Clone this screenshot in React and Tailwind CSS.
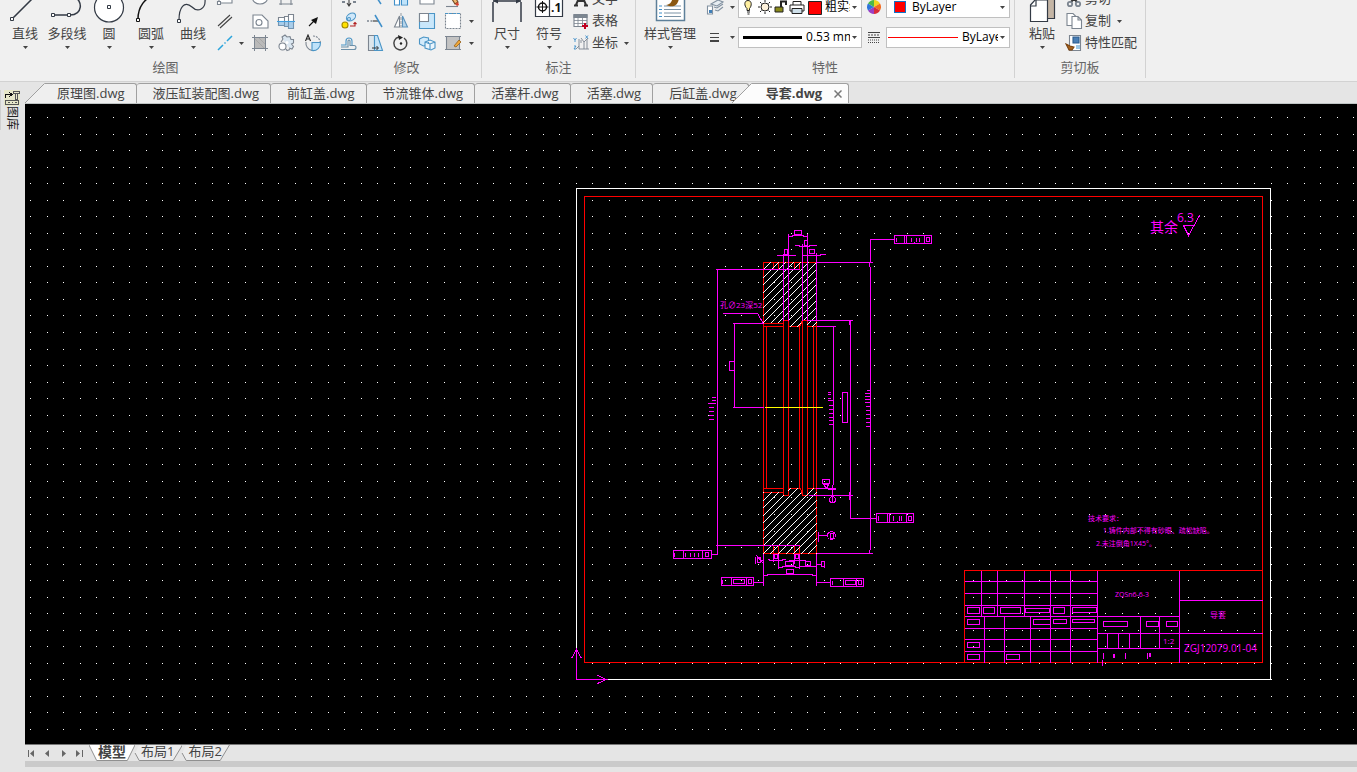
import { useState } from 'react'

const FILES = ['原理图', '液压缸装配图', '前缸盖', '节流锥体', '活塞杆', '活塞', '后缸盖', '导套']

/* ---------- ribbon pieces ---------- */

function Caret() {
  return (
    <svg className="w-[5px] h-[3px] shrink-0" viewBox="0 0 5 3" fill="#444">
      <path d="M0 0h5L2.5 3z" />
    </svg>
  )
}

function Group({ label, children }) {
  return (
    <section className="flex flex-col shrink-0 h-[78px] px-1 border-r border-[#d2d2d2]">
      <div className="flex items-end h-[54px]">{children}</div>
      <h2 className="h-6 pt-[3px] text-[13px] leading-5 text-center text-[#666]">{label}</h2>
    </section>
  )
}

function BigButton({ label, children, wide }) {
  return (
    <button className={wide ? 'flex flex-col items-center w-[60px]' : 'flex flex-col items-center w-[42px]'}>
      <svg className="size-8 shrink-0" viewBox="0 0 32 32" fill="none" stroke="#333a45" strokeWidth="1.5">
        {children}
      </svg>
      <span className="text-[13px] leading-[18px] whitespace-nowrap">{label}</span>
      <span className="flex items-center h-3 pb-0.5"><Caret /></span>
    </button>
  )
}

function Icon({ children }) {
  return (
    <svg className="size-[18px] shrink-0" viewBox="0 0 18 18" fill="none" stroke="#7c8590" strokeWidth="1.1">
      {children}
    </svg>
  )
}

function Tool({ name, children }) {
  return (
    <button aria-label={name} className="flex items-center justify-center h-[22px]">
      <Icon>{children}</Icon>
    </button>
  )
}

function TextTool({ label, arrow, children }) {
  return (
    <button className="flex items-center h-[22px] pl-0.5 gap-0.5 text-[13px] whitespace-nowrap">
      <Icon>{children}</Icon>
      {label}
      {arrow && <span className="pl-1"><Caret /></span>}
    </button>
  )
}

function More({ name }) {
  return (
    <button aria-label={name} className="flex items-center justify-center h-[22px]">
      <Caret />
    </button>
  )
}

function Combo({ name, value, children }) {
  return (
    <div className="flex items-center w-[124px] h-[21px] px-1 bg-white border border-[#c0c0c0] text-black">
      {children}
      <select
        aria-label={name}
        className="flex-1 min-w-0 h-4 ml-1 mr-0.5 p-0 text-[12px] leading-4 appearance-none bg-transparent overflow-hidden"
      >
        <option>{value}</option>
      </select>
      <Caret />
    </div>
  )
}

function DrawGroup() {
  return (
    <Group label="绘图">
      <BigButton label="直线">
        <path d="M3 27L30 0" />
        <path d="M1.500 25.500h3v3h-3z" fill="#fff" strokeWidth="1" />
      </BigButton>
      <BigButton label="多段线">
        <path d="M2 23h17c13 0 13-15 4-18" />
        <path d="M.5 21.500h3v3h-3zM16.500 21.500h3v3h-3z" fill="#fff" strokeWidth="1" />
      </BigButton>
      <BigButton label="圆">
        <circle cx="16" cy="15.500" r="14.500" fill="#fff" strokeWidth="1.2" />
        <path d="M14.500 13.500h3v3h-3z" strokeWidth="1" />
      </BigButton>
      <BigButton label="圆弧">
        <path d="M3 27C3 15 10 5 20 4" stroke="#111" />
        <path d="M1.500 26.500h3v3h-3z" fill="#fff" stroke="#111" strokeWidth="1" />
      </BigButton>
      <BigButton label="曲线">
        <path d="M2 28C2 16 7 8 15 15c6 6 14 2 13-8" strokeWidth="1.2" />
        <path d="M.5 27.500h3v3h-3z" fill="#fff" strokeWidth="1" />
      </BigButton>
      <div className="grid grid-cols-[22px_11px_26px_26px_28px]">
        <Tool name="矩形"><path d="M3 12V3h13v10H5" fill="#fff" /><path d="M1.500 11.500h3v3h-3z" fill="#fff" /></Tool>
        <span />
        <Tool name="椭圆"><ellipse cx="9" cy="8" rx="7.500" ry="6" fill="#fff" /></Tool>
        <Tool name="孔/轴"><path d="M4 2v13M14 2v13M2 14h14M4 3h10" /></Tool>
        <span />

        <Tool name="双线"><path d="M2 14L14 3M4 16L16 5" stroke="#444" /></Tool>
        <span />
        <Tool name="轮廓线">
          <path d="M2 3h9l6 6v7H2z" fill="#fff" />
          <circle cx="8" cy="10.500" r="3" />
        </Tool>
        <Tool name="轴">
          <path d="M1.500 5.500h6v4h-6zM7.500 4.500h4v5h-4zM11.500 2.500h5v7h-5z" fill="#fff" />
          <path d="M1.500 9.500h6v4h-6zM7.500 9.500h4v5h-4zM11.500 9.500h5v7h-5z" fill="#a9cdea" stroke="#7395b2" />
          <path d="M0 9.500h18" stroke="#3f9fe0" />
        </Tool>
        <Tool name="箭头">
          <path d="M5 14l5-5" stroke="#111" />
          <path d="M14 5l-2 7-5-4z" fill="#111" stroke="none" />
        </Tool>

        <Tool name="中心线"><path d="M2 16l5-5M8.500 9.500l1-1M11 7l5-5" stroke="#2aa4dc" strokeWidth="1.500" /></Tool>
        <More name="更多中心线" />
        <Tool name="剖面线">
          <path d="M3 3h12v12H3z" fill="#b9b9b9" stroke="none" />
          <path d="M1 3.500h16M1 14.500h16M3.500 1v16M14.500 1v16" strokeWidth="1" />
          <path d="M4 5l9 9M8 4l6 6" stroke="#a2a2a2" strokeWidth=".8" />
        </Tool>
        <Tool name="齿轮">
          <path
            d="M6 5l-1-2 3-2 2 2 3-.5 1 3 2.500 0v3.500l-2 1 2 2.500-1.500 2.500-3-1"
            fill="#dbe7f1"
          />
          <path d="M13 15.500l-3 1-1-1.500M6 5L4 8" fill="none" />
          <circle cx="5.500" cy="12.500" r="3.500" fill="#fff" />
          <circle cx="10" cy="8.500" r="1.500" fill="#fff" stroke="none" />
        </Tool>
        <Tool name="局部放大">
          <path d="M2 8a7.500 7.500 0 0 0 6 8.500" />
          <path d="M9 2a7.500 7.500 0 0 1 7.500 7" strokeDasharray="2 1" />
          <path d="M8 8.500h8.500A7.500 7.500 0 0 1 8 16.500z" fill="#bfe3fa" stroke="#4b95c6" />
          <path d="M1.500 7L4 1l2.500 6M2.500 5h3" stroke="#222" />
        </Tool>
      </div>
    </Group>
  )
}

function ModifyGroup() {
  return (
    <Group label="修改">
      <div className="grid grid-cols-[26px_26px_26px_26px_26px_11px]">
        <Tool name="移动"><path d="M9 1v14M2 9h14M7 13l2 3 2-3" stroke="#444" /><path d="M2 12h3M13 12h3" strokeWidth="2" /></Tool>
        <Tool name="裁剪"><path d="M7 2l8 12" stroke="#3f8fc9" strokeWidth="1.500" /><path d="M2 9h6" strokeDasharray="2 1" /></Tool>
        <Tool name="阵列"><path d="M2.500 5v10h5V5M9.500 2v13h6V2z" fill="#fff" stroke="#3f8fc9" /><path d="M10 8h5v6h-5z" fill="#bfe3fa" stroke="none" /></Tool>
        <Tool name="圆角"><path d="M2 2h14v12H2z" fill="#fff" /></Tool>
        <Tool name="删除">
          <path d="M6 6l5 8 3-2-5-8z" fill="#f1b56c" stroke="#6e4a22" />
          <path d="M11 14l3-2 1 3-2 1z" fill="#d8422e" stroke="none" />
          <path d="M2 16.500h12" />
        </Tool>
        <span />

        <Tool name="复制对象">
          <circle cx="5" cy="13" r="3" fill="#ffe200" stroke="#a38b00" />
          <ellipse cx="11" cy="5" rx="5" ry="3.500" transform="rotate(-35 11 5)" fill="#cfe8fa" stroke="#4b95c6" />
          <circle cx="9" cy="7" r="1.500" stroke="#4b95c6" />
          <path d="M10 14h5v-3M13.500 12l1.500-1.500L16.500 12" stroke="#b12121" />
        </Tool>
        <Tool name="延伸">
          <path d="M1 9h2M4.500 9h2" strokeWidth="1.500" />
          <path d="M7 9h6" stroke="#333" />
          <path d="M9 3l7 12" stroke="#3f8fc9" strokeWidth="1.500" />
        </Tool>
        <Tool name="镜像">
          <path d="M7.500 4v11h-5z" fill="#fff" />
          <path d="M10.500 4v11h5z" fill="#b8d5ea" stroke="#5b93bd" />
          <path d="M9 1v16" strokeDasharray="3 1" strokeWidth=".8" />
        </Tool>
        <Tool name="缩放">
          <path d="M1.500 1.500h15v15h-15z" fill="#c9e7fb" stroke="#4b95c6" />
          <path d="M1.500 1.500h9v8h-9z" fill="#fff" />
        </Tool>
        <Tool name="拉伸">
          <path d="M1.500 1.500h15v15h-15z" fill="#fff" strokeDasharray="2 1" />
          <path d="M1 1.500h16" stroke="#4b95c6" strokeDasharray="3 1" />
        </Tool>
        <More name="更多编辑" />

        <Tool name="偏移">
          <path d="M1 11h5V7a3 3 0 0 1 6 0v4" stroke="#4b95c6" />
          <path d="M1 15.500h13a2 2 0 0 0 0-4h-4V7a1 1 0 0 0-2 0v6H1" stroke="#6b8fa8" />
        </Tool>
        <Tool name="倒角">
          <path d="M2.500 1.500h6v15h-6z" fill="#dde6ec" />
          <path d="M8.500 1.500h3l5 15h-8z" fill="#c5e4f9" stroke="#4b95c6" />
          <path d="M6 14h6M10.500 12l2 2-2 2" stroke="#222" strokeWidth=".9" />
        </Tool>
        <Tool name="旋转">
          <path d="M12 4A6.500 6.500 0 1 1 7 3" stroke="#444" strokeWidth="1.500" />
          <path d="M6 1l5 2.500L7 6z" fill="#222" stroke="none" />
          <circle cx="9" cy="9.500" r="1.200" fill="#222" stroke="none" />
        </Tool>
        <Tool name="块">
          <path d="M1.500 5l4-2 5 1v7l-5 1-4-2z" fill="#d3ebfb" stroke="#4b95c6" />
          <path d="M7 8l5-2 5 2v6l-4 2-6-2zM7 8l5 2 5-2M12 10v6" fill="#eaf5fd" stroke="#4b95c6" />
        </Tool>
        <Tool name="填充编辑">
          <path d="M2.500 2.500h13v13h-13z" fill="#c3c3c3" />
          <path d="M1 2.500h16M1 15.500h16" strokeWidth="1" />
          <path d="M10 12l5-6 2 2-5 5z" fill="#f0a73a" stroke="#94611a" strokeWidth=".8" />
        </Tool>
        <More name="更多填充" />
      </div>
    </Group>
  )
}

function NoteGroup() {
  return (
    <Group label="标注">
      <BigButton label="尺寸">
        <path d="M2 10v20M30 10v20M2 9h28" />
        <path d="M2 9l5-2.500v5zM30 9l-5-2.500v5z" fill="#333a45" stroke="none" />
      </BigButton>
      <BigButton label="符号">
        <path d="M2.500 4v20.500h27V4zM16.500 4v20" fill="#fff" strokeWidth="1.200" />
        <circle cx="9.500" cy="15" r="4" stroke="#111" />
        <path d="M3.500 15h12M9.500 9v12" stroke="#111" strokeWidth="1" />
        <text x="18" y="20" fontSize="12" fontWeight="700" fill="#111" stroke="none">.1</text>
      </BigButton>
      <div className="flex flex-col pr-0.5">
        <TextTool label="文字"><path d="M4 15L9 3l5 12M6 11h6M2 15.500h4M12 15.500h4" stroke="#333" strokeWidth="2" /></TextTool>
        <TextTool label="表格">
          <path d="M2 2.500h13v12H2z" fill="#fff" />
          <path d="M2 3h13v2.500H2z" fill="#7d8791" />
          <path d="M2 8.500h13M2 11.500h13M6 5v9M10.500 5v9" strokeWidth=".8" />
          <path d="M13 11v6M10 14h6" stroke="#c00020" strokeWidth="2" />
        </TextTool>
        <TextTool label="坐标" arrow>
          <path d="M7 5v10h10M4 15l3-3M9 4l3 4 4-4M9 6v3M12 8v7M15 5v10" strokeWidth=".9" />
          <path d="M1.500 4l1.500 2 1.500-2M3 6v2M13.500 1.500l2.500 3M16 1.500l-2.500 3M2 12h2l-2 3h2" stroke="#3f8fc9" strokeWidth=".9" />
        </TextTool>
      </div>
    </Group>
  )
}

function PropertyGroup() {
  return (
    <Group label="特性">
      <BigButton label="样式管理" wide>
        <path d="M2.500 0v28.500h28V0z" fill="#fff" stroke="#5d7f99" />
        <path d="M5 14h3M5 17.500h3M5 21h3M5 24.500h3" stroke="#3f8fc9" strokeWidth="1" />
        <path d="M10 14h17M10 17.500h17M10 21h17M10 24.500h17" stroke="#7b93a6" strokeWidth="1" />
        <path d="M12 13c6-1 5-4 8-9l5 2c-1 8-6 10-13 7z" fill="#8a5712" stroke="none" />
      </BigButton>
      <div className="flex flex-col pb-0.5">
        <div className="flex items-center h-[30px]">
          <button aria-label="图层" className="flex items-center w-[38px] pl-1.5 gap-1.5">
            <Icon>
              <path d="M5 6l7-4 5 2-6 4zM8 9l3 1 6-4M9 12l3 1 5-4" fill="#e7edf2" stroke="#8291a0" />
              <path d="M1.500 8h5v8h-5z" fill="#fff" stroke="#8291a0" />
              <path d="M3 12h3v3H3z" fill="#3f7fb8" stroke="none" />
            </Icon>
            <Caret />
          </button>
          <Combo name="图层" value="粗实线层">
            <svg className="w-[82px] h-4 -ml-0.5 -mr-0.5 shrink-0" viewBox="0 0 82 16" fill="none" stroke="#222">
              <path d="M6 9.500C3 7 3 1.500 7 1.500S11 7 8.500 9.500v2H6z" fill="#ffefa0" />
              <path d="M6 13h3M6.500 15h2" />
              <circle cx="24" cy="8" r="4" fill="#fff3dc" />
              <path d="M24 1v2M24 13v2M17 8h2M29 8h2M19 3l1.500 1.500M27.500 11.500L29 13M29 3l-1.500 1.500M20.500 11.500L19 13" />
              <path d="M34 8h8v5h-8z" fill="#8a8a1c" />
              <path d="M40 8V2.500h5V6" strokeWidth="2" />
              <path d="M52 6V2.500h8V6M49 6h14v6H49z" fill="#fff" />
              <path d="M51 9.500h10v5H51z" fill="#cfe0ea" />
              <path d="M67.500 2.500h13v13h-13z" fill="#f00" />
            </svg>
          </Combo>
          <button aria-label="颜色" className="flex items-center justify-center w-6">
            <svg className="size-[14px]" viewBox="-7 -7 14 14">
              <path d="M0 0V-7A7 7 0 0 1 6-3.500z" fill="#f0d51f" />
              <path d="M0 0L6-3.500A7 7 0 0 1 6 3.500z" fill="#f26b21" />
              <path d="M0 0L6 3.500A7 7 0 0 1 0 7z" fill="#d92b3a" />
              <path d="M0 0V7A7 7 0 0 1-6 3.500z" fill="#9b3fc4" />
              <path d="M0 0L-6 3.500A7 7 0 0 1-6-3.500z" fill="#2f75dc" />
              <path d="M0 0L-6-3.500A7 7 0 0 1 0-7z" fill="#4db848" />
            </svg>
          </button>
          <Combo name="颜色" value="ByLayer">
            <span className="size-3 ml-[3px] mr-0.5 shrink-0 bg-[#f00] border border-[#1173c8]" />
          </Combo>
        </div>
        <div className="flex items-center h-[30px]">
          <button aria-label="线宽" className="flex items-center w-[38px] pl-1.5 gap-1.5">
            <Icon><path d="M4 5.500h9M4 9.500h9" stroke="#444" /><path d="M4 13h9" stroke="#444" strokeWidth="2" /></Icon>
            <Caret />
          </button>
          <Combo name="线宽" value="0.53 mm">
            <span className="w-[59px] h-[3px] shrink-0 bg-black" />
          </Combo>
          <button aria-label="线型" className="flex items-center justify-center w-6">
            <svg className="w-3 h-3" viewBox="0 0 12 12" stroke="#444">
              <path d="M0 1.500h12M0 6.500h12" />
              <path d="M0 4h12" strokeDasharray="2 1" />
              <path d="M0 9h12M0 11.500h12" strokeDasharray="1 1" />
            </svg>
          </button>
          <Combo name="线型" value="ByLayer">
            <span className="w-[70px] h-px -ml-[3px] shrink-0 bg-[#f00]" />
          </Combo>
        </div>
      </div>
    </Group>
  )
}

function ClipboardGroup() {
  return (
    <Group label="剪切板">
      <div className="pl-0.5">
        <BigButton label="粘贴">
          <path d="M12 0h16.500v26.500H12z" fill="#c4b5a5" strokeWidth="1.200" />
          <path d="M4.500 13L9 8h12.500v21.500h-17z" fill="#fff" strokeWidth="1.200" />
          <path d="M4.500 14H10V8" strokeWidth="1.200" />
        </BigButton>
      </div>
      <div className="flex flex-col pr-1">
        <TextTool label="剪切">
          <path d="M4 3l8 9M14 3l-8 9" stroke="#333" strokeWidth="2" />
          <circle cx="5" cy="14" r="2.200" strokeWidth="1.800" />
          <circle cx="13" cy="14" r="2.200" strokeWidth="1.800" />
        </TextTool>
        <TextTool label="复制" arrow>
          <path d="M2 1.500h6l3 3v9H2z" fill="#fff" />
          <path d="M7 4.500h6l3.500 3.500v8.500H7zM13 4.500V8h3.500" fill="#fff" />
        </TextTool>
        <TextTool label="特性匹配">
          <path d="M4.500 1.500h11v15h-11z" fill="#fff" />
          <path d="M8 3h6v6H8z" fill="#4a7fb5" stroke="#2c5d8f" />
          <path d="M11 12h4M11 14h4" stroke="#3f8fc9" />
          <path d="M1 10l4 2 4 1-2 3H4z" fill="#a5611c" stroke="#7a4310" />
        </TextTool>
      </div>
    </Group>
  )
}

/* ---------- file tabs ---------- */

function Slope({ active }) {
  return (
    <svg
      className={active ? 'w-5 h-5 shrink-0 z-10 -ml-[17px]' : 'w-5 h-5 shrink-0'}
      viewBox="0 0 20 20"
      fill={active ? '#fcfcfc' : '#efefef'}
    >
      <path d="M0 20L20 0v20z" />
      <path d="M0 20L19.500 .5H20" fill="none" stroke="#a0a0a0" />
    </svg>
  )
}

function FileTabs() {
  const [current, setCurrent] = useState(FILES.length - 1)
  return (
    <nav className="flex items-end h-[22px] text-[13px] border-b border-[#bfc4c4]">
      {FILES.map((file, i) => {
        const on = i === current
        return (
          <div key={file} className="flex h-5">
            {(i === 0 || on) && <Slope active={on} />}
            <div
              className={
                on
                  ? 'flex items-start h-5 pl-3.5 pr-1.5 gap-3 bg-[#fcfcfc] border-t border-r border-[#a0a0a0] rounded-tr-[3px] font-bold'
                  : i === 0
                    ? 'flex items-start h-5 pl-3 pr-[11px] bg-[#efefef] border-t border-r border-[#a0a0a0] rounded-tr-[3px]'
                    : 'flex items-start h-5 pl-4 pr-[11px] bg-[#efefef] border-t border-r border-[#a0a0a0] rounded-t-[3px]'
              }
            >
              <button className="leading-[18px] whitespace-nowrap" onClick={() => setCurrent(i)}>{file}.dwg</button>
              {on && (
                <button aria-label="关闭" className="flex items-center self-center h-4">
                  <svg className="size-2" viewBox="0 0 8 8" stroke="#777" strokeWidth="1.500">
                    <path d="M.5 .5l7 7M7.500 .5l-7 7" />
                  </svg>
                </button>
              )}
            </div>
          </div>
        )
      })}
    </nav>
  )
}

/* ---------- drawing ---------- */

const STEP = 16.54

function gridPath(cols, rows) {
  let d = ''
  for (let r = 0; r < rows; r++) {
    for (let c = 0; c < cols; c++) {
      d += `M${Math.round(30 + c * STEP)} ${Math.round(117 + r * STEP)}h1v1h-1z`
    }
  }
  return d
}

// 45 degree lines as single pixels, one per row
function hatchPath(start, count, top, bottom) {
  let d = ''
  for (let i = 0; i < count; i++) {
    const sum = Math.round(start + i * 7.6)
    for (let y = top; y <= bottom; y++) {
      const x = sum - y
      if (x >= 763 && x <= 816) d += `M${x} ${y}h1v1h-1z`
    }
  }
  return d
}

const GRID = gridPath(240, 120)
const UPPER_HATCH = hatchPath(1032, 18, 262, 326)
const LOWER_HATCH = hatchPath(1255, 17, 488, 553)

// x, y, width, height of the field boxes in the title block
const FIELDS = [
  [967, 607, 12, 6], [983, 607, 11, 6], [1000, 607, 20, 6], [1025, 608, 24, 4],
  [1053, 607, 11, 6], [1072, 607, 24, 5], [967, 619, 12, 5], [1033, 619, 17, 5],
  [1053, 619, 13, 4], [1072, 619, 22, 3], [967, 642, 12, 5], [967, 654, 12, 5],
  [1006, 654, 13, 5], [1103, 621, 24, 5], [1146, 621, 12, 5], [1166, 621, 11, 5],
]

// small value boxes on the dimension lines
const VALUES = [
  [729, 361, 5, 9], [842, 392, 5, 30], [794, 230, 7, 4], [804, 240, 3, 5], [809, 249, 5, 4],
  [784, 249, 3, 5], [774, 554, 3, 4], [795, 554, 3, 4], [785, 561, 8, 4], [805, 561, 5, 4],
  [786, 569, 7, 4], [926, 237, 3, 4], [908, 516, 3, 4], [705, 552, 3, 4], [733, 579, 11, 4],
  [748, 579, 3, 4], [845, 580, 10, 4], [858, 580, 3, 4],
]

// tolerance frames
const FRAMES = [
  [894, 235, 37, 8], [876, 513, 37, 9], [673, 550, 38, 8], [721, 577, 32, 8], [830, 578, 33, 8],
]

function Boxes({ list }) {
  return list.map(([x, y, w, h]) => <rect key={`${x}-${y}`} x={x} y={y} width={w} height={h} />)
}

function Drawing() {
  return (
    <svg className="block w-full h-full" shapeRendering="crispEdges">
      <defs>
        <clipPath id="upper">
          <path d="M763 262H817V327H807V320H802L800 327H788V320H783V323H763z" />
        </clipPath>
        <clipPath id="lower">
          <path d="M763 492H783V495H788V488H800L802 495H807V488H817V554H763z" />
        </clipPath>
      </defs>
      <g transform="translate(-25 -104)">
        <path d={GRID} fill="#fff" />
        <g transform="translate(.5 .5)" fill="none" stroke="#f0f">
          <rect x="576" y="188" width="694" height="491" stroke="#fff" />
          <rect x="584" y="196" width="678" height="466" stroke="#f00" />

          {/* part outline */}
          <path
            stroke="#f00"
            d="M763 262H816V553H763zM773 262V269M778 262V269M794 262V269M799 262V269M763 323H783M763 326H783M788 326H799L802 320M783 320H788M802 320H807M807 326H816M766 326V488M783 320V495M788 320V495M799 326V488M802 320V495M807 320V495M813 326V488M763 488H783M763 492H783M783 495H788M788 488H800L802 495H807M807 488H816M773 545V553M778 545V553M794 545V553M799 545V553"
          />
        </g>
        <path d={UPPER_HATCH} fill="#fff" clipPath="url(#upper)" />
        <path d={LOWER_HATCH} fill="#fff" clipPath="url(#lower)" />
        <g transform="translate(.5 .5)" fill="none" stroke="#f0f">
          <path d="M764 407H822" stroke="#ff0" />

          {/* dimension and extension lines */}
          <path d="M783 253V320M788 233V320M802 243V320M807 233V320M816 252V320M715 269H799M732 323H763M816 262H872M807 320H852M816 326H835M815 488H835M808 495H852M816 553H872M715 545H799M732 407H763" />
          <path d="M717 269V554H711M734 323V407M833 326V484M832 484V495M850 320V518H876M894 239H870V262M869 262V266M870 266V549M869 549V553M849 320V324M849 491V499" />
          <path d="M722 313H757L763 323M763 553V585M816 553V585M773 553V561M778 553V568M794 553V563M799 553V568M753 582H763M816 582H830" />
          <path d="M788 236H792V235H803V236H807M794 245H799V246H809V245H816M776 255H795M802 255H820V254H825M767 559H769V560H782V559H785M788 560H805M778 567H782V566H795V567H799V566H816M763 575H767V574H812V575H816" />
          <path d="M711 397H715M711 400H715M707 403H715M708 407H713M708 411H713M708 415H713M708 419H713" />
          <path d="M827 392H830M827 394H830M827 398H830M827 400H833M828 405H833M828 409H833M828 413H833M828 417H833M828 420H833M828 424H833" />
          <path d="M866 390H870M864 393H870M864 396H870M864 399H870M864 402H870M865 406H870M865 410H870M865 414H870M865 418H870M865 422H870M865 426H870" />
          <Boxes list={VALUES} />
          <Boxes list={FRAMES} />
          <path d="M896 237V241M904 235V243M906 235V243M924 235V243M911 237V241M914 241V242M916 237V241M919 237V241" />
          <path d="M878 515V520M887 513V522M889 513V522M906 513V522M893 515V520M897 520V521M899 515V520M901 515V520" />
          <path d="M674 552V556M683 550V558M685 552V556M702 550V558M690 552V556M693 556H694V552M698 552V556" />
          <path d="M722 579V583M731 577V585M746 577V585M832 580V584M843 578V586M856 578V586" />

          {/* surface and datum marks */}
          <path d="M822 479H829V483H822zM823 484H828L826 488zM827 489H835M818 531V541M818 535H827" />
          <circle cx="831" cy="535" r="4" />
          <path d="M830 533h3v5h-3zM832 492V502" />
          <circle cx="832" cy="499" r="3" />
          <path d="M755 556V563M757 557h3v5h-3zM760 560H763M816 564H820M821 561h3v5h-3zM824 567V561M756 555L763 563" />

          {/* title block */}
          <path d="M964 662V570H1262" stroke="#f00" />
          <path d="M981 570V616M997 570V616M1024 570V616M1050 570V662M1070 570V662M1097 570V662M1179 570V662M964 581H1097M964 593H1097M964 605H1097M964 616H1179M964 628H1097M964 639H1097M964 651H1097M984 616V662M1004 616V662M1030 616V662" />
          <path d="M1097 633H1262M1097 648H1179M1179 600H1262M1140 616V648M1159 616V648M1107 633V648M1118 633V648M1129 633V648" />
          <path d="M1103 652V658M1102 659V665M1113 653V657M1114 653V657M1125 652V658M1147 652V658M1149 652V656M1150 652V656" />
          <Boxes list={FIELDS} />

          {/* roughness symbol */}
          <path d="M1183 225H1194M1183 225L1188 235L1199 215" />

          {/* coordinate axes */}
          <path d="M606 679H576V650M571 658L576 649L581 658M597 675L606 679L597 683" />
        </g>
        <g fill="#f0f">
          <text x="1150" y="232" fontSize="14">其余</text>
          <text x="1177" y="222" fontSize="12">6.3</text>
          <text x="720" y="308" fontSize="8">孔∅23深52</text>
          <text x="1088" y="521" fontSize="7">技术要求：</text>
          <text x="1103" y="533" fontSize="7">1.铸件内部不得有砂眼、疏松缺陷。</text>
          <text x="1096" y="546" fontSize="7">2.未注倒角1X45°。</text>
          <text x="1115" y="597" fontSize="7">ZQSn6-6-3</text>
          <text x="1210" y="618" fontSize="8">导套</text>
          <text x="1163" y="644" fontSize="8">1:2</text>
          <text x="1184" y="652" fontSize="10">ZGJ12079.01-04</text>
        </g>
      </g>
    </svg>
  )
}

/* ---------- layout tabs ---------- */

function LayoutTab({ label, active }) {
  return (
    <button
      className={
        active
          ? 'relative z-10 flex items-start h-[17px] px-[9px] text-[14px] leading-[13px] font-bold'
          : 'relative flex items-start h-[17px] -ml-0.5 px-2 text-[13px] leading-[13px]'
      }
    >
      <svg
        className="absolute inset-0 w-full h-full"
        viewBox="0 0 48 17"
        preserveAspectRatio="none"
        fill={active ? '#fff' : '#ececec'}
      >
        <path d={active ? 'M0 0L8 15.500H40L48 0' : 'M2 8L6 15.500H39L48 0H6z'} stroke="none" />
        <path
          d={active ? 'M0 0L8 15.500H40L48 0' : 'M2 8L6 15.500H39L48 0'}
          fill="none"
          stroke="#909090"
          vectorEffect="non-scaling-stroke"
        />
      </svg>
      <span className="relative">{label}</span>
    </button>
  )
}

function LayoutBar() {
  return (
    <footer className="shrink-0 bg-[#e5e5e5]">
      <div className="flex h-[17px] border-t border-[#777]">
        <div className="flex items-center w-16 pl-[3px]">
          <button aria-label="第一个"><svg className="w-4 h-[7px]" viewBox="0 0 16 7" fill="#666"><path d="M0 0h1v7H0zM6 0v7L2 3.500z" /></svg></button>
          <button aria-label="上一个"><svg className="w-4 h-[7px]" viewBox="0 0 16 7" fill="#666"><path d="M5 0v7L1 3.500z" /></svg></button>
          <button aria-label="下一个"><svg className="w-4 h-[7px]" viewBox="0 0 16 7" fill="#666"><path d="M2 0v7l4-3.500z" /></svg></button>
          <button aria-label="最后一个"><svg className="w-4 h-[7px]" viewBox="0 0 16 7" fill="#666"><path d="M0 0v7l4-3.500zM6 0h1v7H6z" /></svg></button>
        </div>
        <LayoutTab label="模型" active />
        <LayoutTab label="布局1" />
        <LayoutTab label="布局2" />
      </div>
      <div className="h-1.5 bg-[#cacaca]" />
      <div className="h-[5px]" />
    </footer>
  )
}

export default function App() {
  return (
    <div className="flex flex-col h-screen overflow-hidden bg-[#e5e5e5] text-[#444] font-['Open_Sans','Noto_Sans_CJK_SC',sans-serif]">
      <header className="flex shrink-0 h-[82px] overflow-hidden bg-[#f0f0f0] border-b border-[#d2d2d2]">
        <DrawGroup />
        <ModifyGroup />
        <NoteGroup />
        <PropertyGroup />
        <ClipboardGroup />
      </header>
      <div className="flex flex-1 min-h-0">
        <aside className="w-[25px] shrink-0 pt-2">
          <button className="flex flex-col items-center w-6 pr-0.5 border-l border-[#cfcfcf] text-[#222]">
            <svg className="w-4 h-4" viewBox="0 0 16 16" fill="none" stroke="#111" shapeRendering="crispEdges">
              <path d="M0 0h16v16H0z" fill="#e6e6c8" stroke="none" />
              <path d="M1.500 8V4.500H7M5 2l3 2.500L5 7" />
              <path d="M9 1.500h6v2H9zM11.500 4v5h2V4M1.500 10.500h13v4h-13zM4 12.500h2M8 12.500h1M11 12.500h2" stroke="#555" />
            </svg>
            <span className="text-[12px] leading-4 [writing-mode:vertical-rl] [text-orientation:sideways]">图库</span>
          </button>
        </aside>
        <div className="flex flex-col flex-1 min-w-0">
          <FileTabs />
          <main className="flex-1 min-h-0 bg-black overflow-hidden">
            <Drawing />
          </main>
          <LayoutBar />
        </div>
      </div>
    </div>
  )
}
